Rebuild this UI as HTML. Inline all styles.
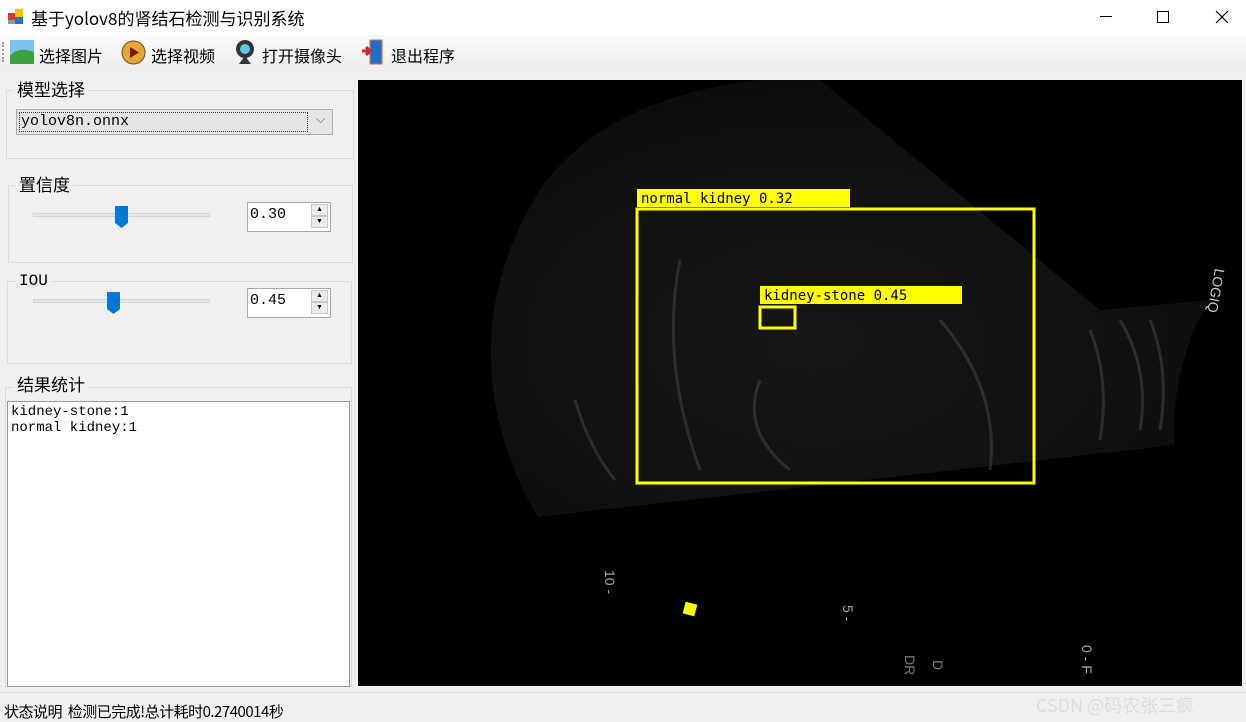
<!DOCTYPE html>
<html><head><meta charset="utf-8"><style>
*{margin:0;padding:0;box-sizing:border-box}
body{width:1246px;height:722px;background:#f0f0f0;font-family:"Liberation Sans","Noto Sans CJK SC",sans-serif;position:relative;overflow:hidden;color:#000}
.a{position:absolute}
.cn{font-family:"Noto Sans CJK SC","WenQuanYi Zen Hei",sans-serif}
.mono{font-family:"Liberation Mono","DejaVu Sans Mono",monospace}
.grp{position:absolute;border:1px solid #dcdcdc}
.lbl{position:absolute;background:#f0f0f0;padding:0 3px;font-size:17px;line-height:20px}
.track{position:absolute;height:4px;background:#e7e7e7;border:1px solid #d6d6d6}
.thumb{position:absolute;width:13px;height:22px}
.num{position:absolute;width:84px;height:30px;background:#fff;border:1px solid #a8a8a8;font-size:15px;padding:3px 2px}
.spin{position:absolute;right:1px;width:17px;height:12px;background:#ececec;border:1px solid #c8c8c8;font-size:7px;text-align:center;line-height:10px}
</style></head><body>
<div class="a" style="left:0;top:0;width:1246px;height:35px;background:#fff"></div>
<svg class="a" style="left:7px;top:8px" width="18" height="18"><rect x="1" y="5" width="7" height="7" fill="#d33"/><rect x="8" y="1" width="8" height="8" fill="#f5c000"/><rect x="8" y="9" width="8" height="7" fill="#2a6fd0"/><rect x="1" y="12" width="7" height="4" fill="#999"/></svg>
<div class="a cn" style="left:31px;top:5px;font-size:17px">基于yolov8的肾结石检测与识别系统</div>
<div class="a" style="left:1100px;top:16px;width:12px;height:1px;background:#000"></div>
<div class="a" style="left:1157px;top:11px;width:12px;height:12px;border:1px solid #000"></div>
<svg class="a" style="left:1215px;top:10px" width="14" height="14"><path d="M1 1L13 13M13 1L1 13" stroke="#000" stroke-width="1.2"/></svg>
<div class="a" style="left:0;top:35px;width:1246px;height:36px;background:linear-gradient(#fafafa,#ededed)"></div>
<div class="a" style="left:2px;top:42px;width:2px;height:20px;border-left:2px dotted #999"></div>
<svg class="a" style="left:10px;top:40px" width="24" height="24"><rect x="0" y="0" width="24" height="24" fill="#7ec0ee"/><path d="M0 16 Q8 6 24 12 V24 H0Z" fill="#3aa040"/></svg>
<div class="a cn" style="left:39px;top:43px;font-size:16px">选择图片</div>
<svg class="a" style="left:121px;top:40px" width="25" height="25"><circle cx="12.5" cy="12.5" r="11.5" fill="#e3a73a" stroke="#7a4a10"/><path d="M9 7 L18 12.5 L9 18Z" fill="#7a1a10"/></svg>
<div class="a cn" style="left:151px;top:43px;font-size:16px">选择视频</div>
<svg class="a" style="left:234px;top:39px" width="22" height="27"><circle cx="11" cy="10" r="9" fill="#333"/><circle cx="11" cy="10" r="5" fill="#5cc8f0"/><path d="M5 25 L11 17 L17 25Z" fill="#333"/></svg>
<div class="a cn" style="left:262px;top:43px;font-size:16px">打开摄像头</div>
<svg class="a" style="left:361px;top:39px" width="24" height="26"><rect x="9" y="1" width="12" height="24" fill="#1e6fd0" stroke="#e07020"/><path d="M1 12 H9 M5 8 L9 12 L5 16" stroke="#d22" stroke-width="3" fill="none"/></svg>
<div class="a cn" style="left:391px;top:43px;font-size:16px">退出程序</div>

<div class="grp" style="left:6px;top:90px;width:348px;height:69px"></div>
<div class="lbl cn" style="left:14px;top:79px">模型选择</div>
<div class="a" style="left:16px;top:109px;width:317px;height:26px;background:#e5e5e5;border:1px solid #adadad"></div>
<div class="a mono" style="left:19px;top:112px;width:289px;height:20px;border:1px dotted #333;font-size:15px;line-height:18px;padding-left:1px">yolov8n.onnx</div>
<div class="a" style="left:316px;top:112px;font-size:12px;color:#555">⌵</div>

<div class="grp" style="left:8px;top:185px;width:345px;height:78px"></div>
<div class="lbl cn" style="left:16px;top:174px">置信度</div>
<div class="track" style="left:33px;top:213px;width:177px"></div>
<svg class="thumb" style="left:115px;top:206px" viewBox="0 0 13 22"><path d="M0 0H13V17L6.5 22L0 17Z" fill="#0078d7"/></svg>
<div class="num mono" style="left:247px;top:202px">0.30</div>
<div class="spin" style="left:311px;top:204px">▲</div><div class="spin" style="left:311px;top:216px">▼</div>

<div class="grp" style="left:7px;top:281px;width:345px;height:83px"></div>
<div class="lbl mono" style="left:16px;top:271px;font-size:16px">IOU</div>
<div class="track" style="left:33px;top:299px;width:177px"></div>
<svg class="thumb" style="left:107px;top:292px" viewBox="0 0 13 22"><path d="M0 0H13V17L6.5 22L0 17Z" fill="#0078d7"/></svg>
<div class="num mono" style="left:247px;top:288px">0.45</div>
<div class="spin" style="left:311px;top:290px">▲</div><div class="spin" style="left:311px;top:302px">▼</div>

<div class="grp" style="left:5px;top:387px;width:347px;height:300px"></div>
<div class="lbl cn" style="left:14px;top:374px">结果统计</div>
<div class="a mono" style="left:7px;top:401px;width:343px;height:286px;background:#fff;border:1px solid #999;font-size:14px;line-height:16px;padding:2px 3px">kidney-stone:1<br>normal kidney:1</div>

<div class="a" style="left:358px;top:80px;width:884px;height:606px;background:#000;overflow:hidden">
<svg width="884" height="606" viewBox="358 80 884 606">
<defs>
<radialGradient id="g" cx="0.45" cy="0.6" r="0.7"><stop offset="0" stop-color="#161616"/><stop offset="0.6" stop-color="#111"/><stop offset="1" stop-color="#0a0a0a"/></radialGradient>
</defs>
<path d="M538 517 C480 420 470 300 540 190 C580 130 660 90 760 80 L820 80 L1100 310 L1210 300 C1190 330 1170 390 1175 445 Z" fill="url(#g)"/>
<g fill="none" stroke="#444" stroke-width="3" opacity="0.55">
<path d="M575 400 Q590 450 615 480"/><path d="M680 260 Q660 360 700 470"/><path d="M760 380 Q740 430 790 470"/><path d="M940 320 Q1000 390 990 470"/><path d="M1090 330 Q1110 380 1100 440"/><path d="M1120 320 Q1150 370 1140 430"/><path d="M1150 320 Q1170 370 1160 430"/>
</g>
<g fill="none" stroke="#ff0" stroke-width="3"><rect x="637" y="209" width="397" height="274"/><rect x="760" y="307" width="35" height="21"/></g>
<rect x="637" y="189" width="213" height="18" fill="#ff0"/><rect x="760" y="286" width="202" height="18" fill="#ff0"/>
<text x="641" y="203" font-family="DejaVu Sans Mono,monospace" font-size="14" fill="#000">normal kidney 0.32</text>
<text x="764" y="300" font-family="DejaVu Sans Mono,monospace" font-size="14" fill="#000">kidney-stone 0.45</text>
<text transform="translate(1215,268) rotate(100)" font-size="14" fill="#ccc" font-family="Liberation Sans">LOGIQ</text>
<rect x="684" y="603" width="12" height="12" fill="#ff0" transform="rotate(15 690 609)"/>
<g fill="#aa9" font-family="Liberation Sans" font-size="14">
<text transform="translate(605,570) rotate(90)">10 -</text><text transform="translate(843,605) rotate(90)">5 -</text>
<text transform="translate(1082,645) rotate(90)">0 - F</text>
</g>
<g fill="#777" font-family="Liberation Sans" font-size="14">
<text transform="translate(905,655) rotate(90)">DR</text><text transform="translate(933,660) rotate(90)">D</text>
</g>
</svg></div>

<div class="a" style="left:0;top:692px;width:1246px;height:1px;background:#ddd"></div>
<div class="a cn" style="left:4px;top:701px;font-size:15px;letter-spacing:-0.5px">状态说明&nbsp;&nbsp;检测已完成!总计耗时0.2740014秒</div>
<div class="a cn" style="left:1036px;top:692px;font-size:18px;color:#ddd">CSDN @码农张三疯</div>
</body></html>
